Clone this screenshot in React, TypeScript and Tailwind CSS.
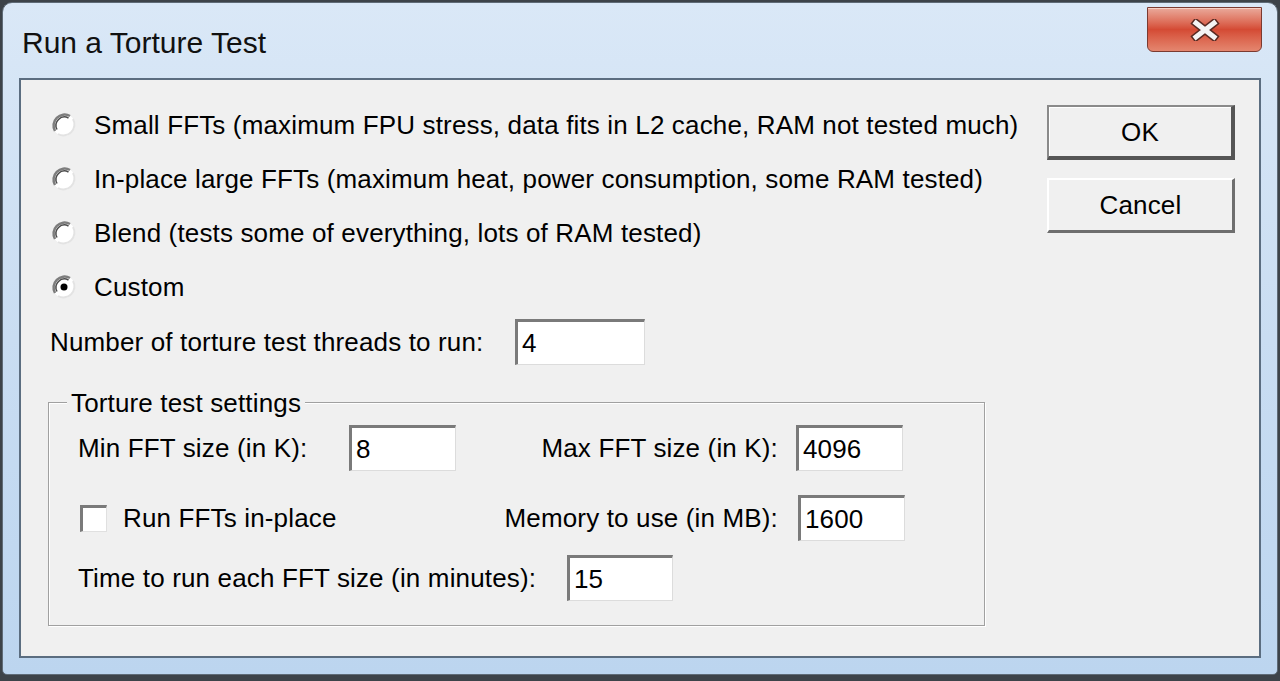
import React from 'react';

const FONT = { fontFamily: '"Liberation Sans", Arial, sans-serif' };

function Radio({ checked }: { checked?: boolean }) {
  return (
    <svg width="26" height="26" viewBox="0 0 26 26" className="shrink-0">
      <circle cx="13" cy="13" r="11" fill="#ffffff" />
      <path d="M4 19 A11 11 0 0 1 19 4" fill="none" stroke="#7d7d7d" strokeWidth="2.5" />
      <path d="M6 17.5 A8.5 8.5 0 0 1 17.5 6" fill="none" stroke="#4a4a4a" strokeWidth="1.5" />
      <path d="M22 7 A11 11 0 0 1 7 22" fill="none" stroke="#e3e3e3" strokeWidth="2" />
      {checked && <circle cx="13" cy="13" r="3.5" fill="#000" />}
    </svg>
  );
}

function Field({ value, w }: { value: string; w: string }) {
  return (
    <div
      className={`${w} flex h-[46px] shrink-0 items-center border-t-[3px] border-l-[3px] border-r border-b border-t-[#7a7a7a] border-l-[#7a7a7a] border-r-[#dcdcdc] border-b-[#dcdcdc] bg-white pl-[4px] text-[26px] leading-none text-black`}
    >
      {value}
    </div>
  );
}

const OPTIONS = [
  { label: 'Small FFTs (maximum FPU stress, data fits in L2 cache, RAM not tested much)' },
  { label: 'In-place large FFTs (maximum heat, power consumption, some RAM tested)' },
  { label: 'Blend (tests some of everything, lots of RAM tested)' },
  { label: 'Custom', checked: true },
];

export default function App() {
  return (
    <div className="h-[681px] w-[1280px] overflow-hidden bg-[#3d4349] px-[2px] pt-[2px]" style={FONT}>
      <div className="flex h-[673px] flex-col rounded-t-[10px] rounded-b-[5px] border border-[#5f6b77] bg-gradient-to-b from-[#dae8f7] via-[#c9ddf2] to-[#bcd5ef] px-[16px] pb-[16px]">
        {/* title bar */}
        <div className="flex h-[75px] shrink-0 items-start justify-between">
          <div className="mt-[21px] pl-[3px] text-[30px] leading-[38px] text-[#111]">Run a Torture Test</div>
          <div className="mt-[4px] mr-[-1px] flex h-[45px] w-[115px] items-center justify-center rounded-b-[6px] border border-[#7b3a30] bg-gradient-to-b from-[#e9a99b] via-[#d44a34] to-[#e4866f] shadow-[inset_0_1px_0_#f6cfc5]">
            <svg width="30" height="22" viewBox="0 0 30 22">
              <path d="M6 4 L24 18 M24 4 L6 18" stroke="#5a2a22" strokeWidth="8" strokeLinecap="square" />
              <path d="M6 4 L24 18 M24 4 L6 18" stroke="#f4f4f4" strokeWidth="5" strokeLinecap="square" />
            </svg>
          </div>
        </div>

        {/* client area */}
        <div className="flex flex-1 border-2 border-[#5b6d80] bg-[#f0f0f0] text-[26px] leading-none tracking-[0.15px] text-black">
          <div className="flex-1 pl-[29px] pt-[18px]">
            {OPTIONS.map((o) => (
              <div key={o.label} className="flex h-[54px] items-center gap-[17px] pl-[1px]">
                <Radio checked={o.checked} />
                <span>{o.label}</span>
              </div>
            ))}

            <div className="flex h-[56px] items-center">
              <span className="w-[465px]">Number of torture test threads to run:</span>
              <Field value="4" w="w-[130px]" />
            </div>

            {/* group box */}
            <div className="relative mt-[32px] ml-[-2px] h-[224px] w-[937px] border border-[#a0a0a0] shadow-[inset_1px_1px_0_#ffffff,1px_1px_0_#ffffff]">
              <span className="absolute left-[18px] top-[-14px] bg-[#f0f0f0] px-[4px] leading-[28px]">
                Torture test settings
              </span>

              <div className="mt-[22px] flex h-[46px] items-center justify-between pl-[29px] pr-[81px]">
                <div className="flex items-center">
                  <span className="w-[271px]">Min FFT size (in K):</span>
                  <Field value="8" w="w-[107px]" />
                </div>
                <div className="flex items-center gap-[18px]">
                  <span>Max FFT size (in K):</span>
                  <Field value="4096" w="w-[107px]" />
                </div>
              </div>

              <div className="mt-[24px] flex h-[46px] items-center justify-between pl-[31px] pr-[79px]">
                <div className="flex items-center gap-[16px]">
                  <div className="h-[27px] w-[27px] border-t-[3px] border-l-[3px] border-t-[#7a7a7a] border-l-[#7a7a7a] border-r border-b border-r-[#e0e0e0] border-b-[#e0e0e0] bg-white" />
                  <span>Run FFTs in-place</span>
                </div>
                <div className="flex items-center gap-[20px]">
                  <span>Memory to use (in MB):</span>
                  <Field value="1600" w="w-[107px]" />
                </div>
              </div>

              <div className="mt-[14px] flex h-[46px] items-center pl-[29px]">
                <span className="w-[489px]">Time to run each FFT size (in minutes):</span>
                <Field value="15" w="w-[106px]" />
              </div>
            </div>
          </div>

          {/* buttons */}
          <div className="mr-[24px] flex w-[188px] flex-col gap-[18px] pt-[25px]">
            <button className="flex h-[55px] items-center justify-center border-t-2 border-l-2 border-r-[4px] border-b-[4px] border-t-[#8a8a8a] border-l-[#8a8a8a] border-r-[#555] border-b-[#555] bg-[#f0f0f0] shadow-[inset_1px_1px_0_#ffffff]">
              OK
            </button>
            <button className="flex h-[55px] items-center justify-center border-t-2 border-l-2 border-r-[3px] border-b-[3px] border-t-[#ffffff] border-l-[#ffffff] border-r-[#6e6e6e] border-b-[#6e6e6e] bg-[#f0f0f0]">
              Cancel
            </button>
          </div>
        </div>
      </div>
    </div>
  );
}
